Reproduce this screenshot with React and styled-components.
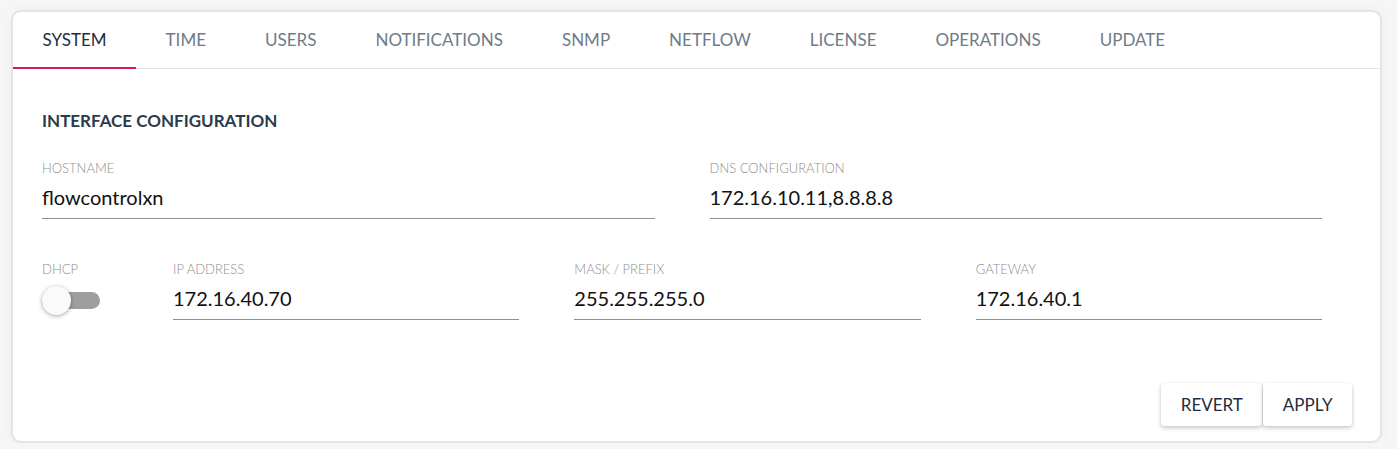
import React, { useState } from "react";
import styled, { createGlobalStyle } from "styled-components";

const Global = createGlobalStyle`
  html, body { margin: 0; padding: 0; background: #f6f6f7; }
  body { font-family: Lato, "Open Sans", sans-serif; }
  * { box-sizing: border-box; }
`;

const Card = styled.div`
  margin: 10px 15px 0 11px;
  height: 433px;
  background: #fff;
  border: 2px solid #e1e4e8;
  border-radius: 10px;
  box-shadow: 0 0 12px rgba(0, 0, 0, 0.04);
  display: flex;
  flex-direction: column;
`;

const TabBar = styled.div`
  display: flex;
  height: 57px;
  border-bottom: 1px solid #e2e4e7;
`;

const Tab = styled.div`
  padding: 0 29.5px;
  display: flex;
  align-items: center;
  font-size: 17px;
  text-transform: uppercase;
  color: ${(p) => (p.$active ? "#1f2d3d" : "#6f7b88")};
  border-bottom: 2px solid ${(p) => (p.$active ? "#d6185a" : "transparent")};
  margin-bottom: -1px;
  cursor: pointer;
`;

const Body = styled.div`
  flex: 1;
  padding: 42px 58px 0 29px;
  display: flex;
  flex-direction: column;
`;

const Heading = styled.div`
  font-size: 17px;
  line-height: 20px;
  font-weight: 700;
  color: #2c3a4b;
  margin-bottom: 29px;
`;

const Row = styled.div`
  display: grid;
  grid-template-columns: ${(p) => p.$cols};
  column-gap: 55px;
  margin-bottom: ${(p) => p.$mb || 0}px;
`;

const Field = styled.div`
  display: flex;
  flex-direction: column;
`;

const Label = styled.div`
  font-size: 13px;
  line-height: 16px;
  font-weight: 300;
  color: #8e8e8e;
  margin-bottom: 4px;
  text-transform: uppercase;
`;

const Input = styled.input`
  height: 39px;
  border: none;
  border-bottom: 1px solid #8f8f8f;
  padding: 0 0 4px 0;
  font-family: Lato, sans-serif;
  font-size: 20px;
  color: #111;
  background: transparent;
  outline: none;
  width: 100%;
`;

const ToggleWrap = styled.div`
  height: 39px;
  display: flex;
  align-items: center;
`;

const Track = styled.div`
  position: relative;
  width: 58px;
  height: 17px;
  border-radius: 9px;
  background: #9e9e9e;
`;

const Thumb = styled.div`
  position: absolute;
  left: 0;
  top: -6px;
  width: 29px;
  height: 29px;
  border-radius: 50%;
  background: #fafafa;
  box-shadow: 0 1px 4px rgba(0, 0, 0, 0.35);
`;

const Actions = styled.div`
  margin-top: auto;
  display: flex;
  justify-content: flex-end;
  gap: 1px;
  padding: 0 28px 15px 0;
`;

const Button = styled.button`
  height: 43px;
  padding: 0 19.5px;
  border: none;
  border-radius: 3px;
  background: #fff;
  font-family: Lato, sans-serif;
  font-size: 17px;
  color: #1f2d3d;
  text-transform: uppercase;
  box-shadow: 0 2px 4px rgba(0, 0, 0, 0.22), 0 0 1px rgba(0, 0, 0, 0.12);
  cursor: pointer;
`;

const tabs = ["System", "Time", "Users", "Notifications", "SNMP", "Netflow", "License", "Operations", "Update"];

export default function App() {
  const [vals, setVals] = useState({
    hostname: "flowcontrolxn",
    dns: "172.16.10.11,8.8.8.8",
    ip: "172.16.40.70",
    mask: "255.255.255.0",
    gw: "172.16.40.1",
  });
  const set = (k) => (e) => setVals({ ...vals, [k]: e.target.value });
  return (
    <>
      <Global />
      <Card>
        <TabBar>
          {tabs.map((t, i) => (
            <Tab key={t} $active={i === 0}>{t}</Tab>
          ))}
        </TabBar>
        <Body>
          <Heading>INTERFACE CONFIGURATION</Heading>
          <Row $cols="1fr 1fr" $mb={42}>
            <Field>
              <Label>Hostname</Label>
              <Input value={vals.hostname} onChange={set("hostname")} />
            </Field>
            <Field>
              <Label>DNS Configuration</Label>
              <Input value={vals.dns} onChange={set("dns")} />
            </Field>
          </Row>
          <Row $cols="76px 1fr 1fr 1fr">
            <Field>
              <Label>DHCP</Label>
              <ToggleWrap>
                <Track>
                  <Thumb />
                </Track>
              </ToggleWrap>
            </Field>
            <Field>
              <Label>IP Address</Label>
              <Input value={vals.ip} onChange={set("ip")} />
            </Field>
            <Field>
              <Label>Mask / Prefix</Label>
              <Input value={vals.mask} onChange={set("mask")} />
            </Field>
            <Field>
              <Label>Gateway</Label>
              <Input value={vals.gw} onChange={set("gw")} />
            </Field>
          </Row>
        </Body>
        <Actions>
          <Button>Revert</Button>
          <Button>Apply</Button>
        </Actions>
      </Card>
    </>
  );
}
